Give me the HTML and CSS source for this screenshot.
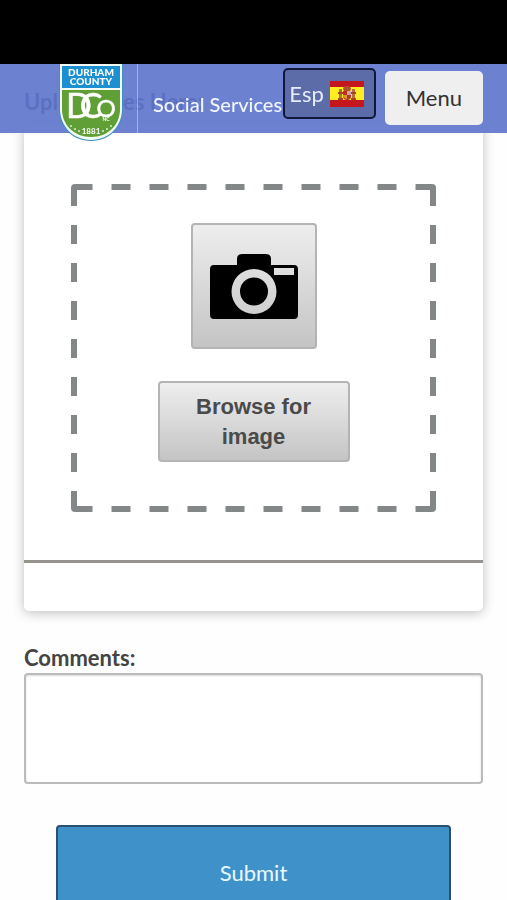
FILE: index.html
```
<!DOCTYPE html>
<html lang="en">
<head>
<meta charset="utf-8">
<meta name="viewport" content="width=device-width, initial-scale=1">
<title>Durham County Social Services</title>
<link rel="stylesheet" href="styles.css">
</head>

<body>
  <div class="top">
    <div class="status-bar"></div>
    <header class="header">
      <a class="logo" href="#" aria-label="Durham County">
        <svg width="64" height="77" viewBox="0 0 64 77">
          <path d="M0 0H64V45C64 63 51 77 32 77C13 77 0 63 0 45Z" fill="#3d8fc4"/>
          <path d="M1 0H63V45C63 62 50 76 32 76C14 76 1 62 1 45Z" fill="#f4fbf6"/>
          <path d="M3 2H61V24H3Z" fill="#1b8fd0"/>
          <path d="M3 26H61V45C61 61 49 73 32 73C15 73 3 61 3 45Z" fill="#5f9f35"/>
          <g fill="#fff" text-anchor="middle" font-family="Lato, sans-serif">
            <g font-size="10" font-weight="900">
              <text x="32" y="12">DURHAM</text>
              <text x="32" y="21">COUNTY</text>
            </g>
            <g font-size="34" stroke="#fff" stroke-width="0.5">
              <text x="20" y="54">D</text>
              <text x="32" y="54">C</text>
            </g>
            <text x="47" y="53" font-size="24" stroke="#fff" stroke-width="0.5">O</text>
            <text x="47" y="57" font-size="5" font-weight="700">NC</text>
            <text x="32" y="70" font-size="8" font-weight="700">1881</text>
          </g>
          <g fill="#d9ecc9">
            <circle cx="12" cy="62" r="1"/><circle cx="16" cy="65" r="1"/><circle cx="20" cy="67" r="1"/>
            <circle cx="44" cy="67" r="1"/><circle cx="48" cy="65" r="1"/><circle cx="52" cy="62" r="1"/>
          </g>
        </svg>
      </a>
      <span class="site-name">Social Services</span>
      <div class="actions">
        <button type="button" class="lang">Esp
          <svg width="34" height="26" viewBox="0 0 34 26" aria-hidden="true">
            <path d="M0 0H34V26H0Z" fill="#c5161d"/>
            <path d="M0 6H34V19H0Z" fill="#fcee21"/>
            <path d="M9 8h3v11H9zM22 8h3v11h-3z" fill="#b5703a"/>
            <path d="M8 11h5v2H8zM21 11h5v2h-5zM8 17h5v2H8zM21 17h5v2h-5z" fill="#a8432a"/>
            <path d="M13 8q0-3 4-3t4 3l-1 2h-6z" fill="#b0502a"/>
            <path d="M13 10h8v5q0 4-4 4t-4-4z" fill="#b8322a"/>
            <path d="M17 10h4v4h-4z" fill="#d8a09a"/>
            <path d="M13 14h4v4q-4-1-4-4z" fill="#d99a2b"/>
          </svg>
        </button>
        <button type="button" class="menu">Menu</button>
      </div>
    </header>
  </div>

  <main class="page">
    <h2 class="title">Upload Files Here:</h2>
    <section class="card">
      <div class="dropzone">
        <button type="button" class="btn camera" aria-label="Take a picture">
          <svg width="88" height="65" viewBox="0 0 88 65">
            <path fill-rule="evenodd" d="M4 11H27V5Q27 0 32 0H56Q61 0 61 5V11H84Q88 11 88 15V61Q88 65 84 65H4Q0 65 0 61V15Q0 11 4 11ZM64 14V21H84V14ZM44 15A22.5 22.5 0 1 0 44 60A22.5 22.5 0 1 0 44 15Z"/>
            <circle cx="44" cy="37.500" r="14"/>
          </svg>
        </button>
        <button type="button" class="btn browse">Browse for image</button>
      </div>
      <div class="card-footer"></div>
    </section>

    <form class="comments">
      <label for="comments">Comments:</label>
      <textarea id="comments" name="comments"></textarea>
      <button type="submit" class="submit">Submit</button>
    </form>
  </main>
</body>
</html>
```
FILE: styles.css
```
* { box-sizing: border-box; }

body {
  margin: 0;
  padding-top: 64px;
  background: #fefefe;
  color: #444;
  font: 22px/30px Lato, sans-serif;
}

button {
  margin: 0;
  font: inherit;
  cursor: pointer;
}

/* header stays over the scrolled content */
.top {
  position: fixed;
  top: 0;
  left: 0;
  right: 0;
  z-index: 10;
}

.status-bar {
  height: 64px;
  background: #000;
}

.header {
  display: flex;
  height: 69px;
  padding: 0 24px 0 59px;
  background: rgba(95, 116, 204, 0.91);
}

.logo {
  flex: none;
  height: 69px;
}

.logo svg { display: block; }

.site-name {
  flex: 1 1 0;
  min-width: 0;
  margin-left: 14px;
  padding-left: 15px;
  border-left: 1px solid #a3b0e6;
  color: #f2f6ff;
  font-size: 20px;
  font-weight: 500;
  line-height: 80px;
  white-space: nowrap;
}

.actions {
  display: flex;
  flex: none;
  gap: 9px;
  align-items: flex-start;
  padding-top: 4px;
}

.lang {
  display: flex;
  gap: 6px;
  align-items: center;
  height: 51px;
  padding: 0 10px 0 4px;
  border: 2px solid #10183a;
  border-radius: 5px;
  background: #5b6ca8;
  color: #e6ecfa;
}

.menu {
  height: 54px;
  margin-top: 3px;
  padding: 0 21px;
  border: 0;
  border-radius: 5px;
  background: #efefef;
  color: #333;
}

.page { padding: 23px 24px 0; }

.title {
  margin: 0 0 7px;
  font-size: 22px;
  line-height: 30px;
}

.card {
  padding-top: 60px;
  border-radius: 5px;
  background: #fff;
  box-shadow: 0 2px 12px rgba(0, 0, 0, 0.25);
}

.dropzone {
  --h: linear-gradient(90deg, #838788 10px, transparent 10px 29px, #838788 29px);
  --v: linear-gradient(transparent 10px, #838788 10px 29px, transparent 29px);
  display: flex;
  flex-direction: column;
  gap: 32px;
  align-items: center;
  margin: 0 47px 48px;
  padding: 39px 20px 50px;
  border-radius: 4px;
  background:
    linear-gradient(#838788, #838788) 0 0 / 6px 20px no-repeat,
    linear-gradient(#838788, #838788) 100% 0 / 6px 20px no-repeat,
    linear-gradient(#838788, #838788) 0 100% / 6px 20px no-repeat,
    linear-gradient(#838788, #838788) 100% 100% / 6px 20px no-repeat,
    var(--h) top / 38px 6px repeat-x,
    var(--h) bottom / 38px 6px repeat-x,
    var(--v) left / 6px 38px repeat-y,
    var(--v) right / 6px 38px repeat-y;
}

.btn {
  border: 2px solid #b4b4b4;
  border-radius: 4px;
  background: linear-gradient(#eee, #c4c4c4);
  color: #4a4a4a;
  font: bold 22px/30px "Liberation Sans", Arial, sans-serif;
}

.camera {
  display: grid;
  place-items: center;
  width: 126px;
  height: 126px;
  padding: 0;
}

.browse {
  width: 192px;
  height: 81px;
  padding: 0 30px;
}

.card-footer {
  height: 51px;
  border-top: 3px solid #97938f;
}

.comments {
  display: flex;
  flex-direction: column;
  padding: 32px 0 24px;
}

.comments label {
  font-weight: bold;
}

.comments textarea {
  height: 111px;
  margin: 0 0 41px;
  padding: 10px;
  border: 2px solid #bbb;
  border-radius: 4px;
  background: #fff;
  box-shadow: inset 0 1px 2px rgba(0, 0, 0, 0.15);
  font: inherit;
  resize: none;
}

.submit {
  height: 96px;
  margin: 0 32px;
  border: 2px solid #2c4f70;
  border-radius: 4px;
  background: #3f92c9;
  color: #e9f8ff;
}
```
